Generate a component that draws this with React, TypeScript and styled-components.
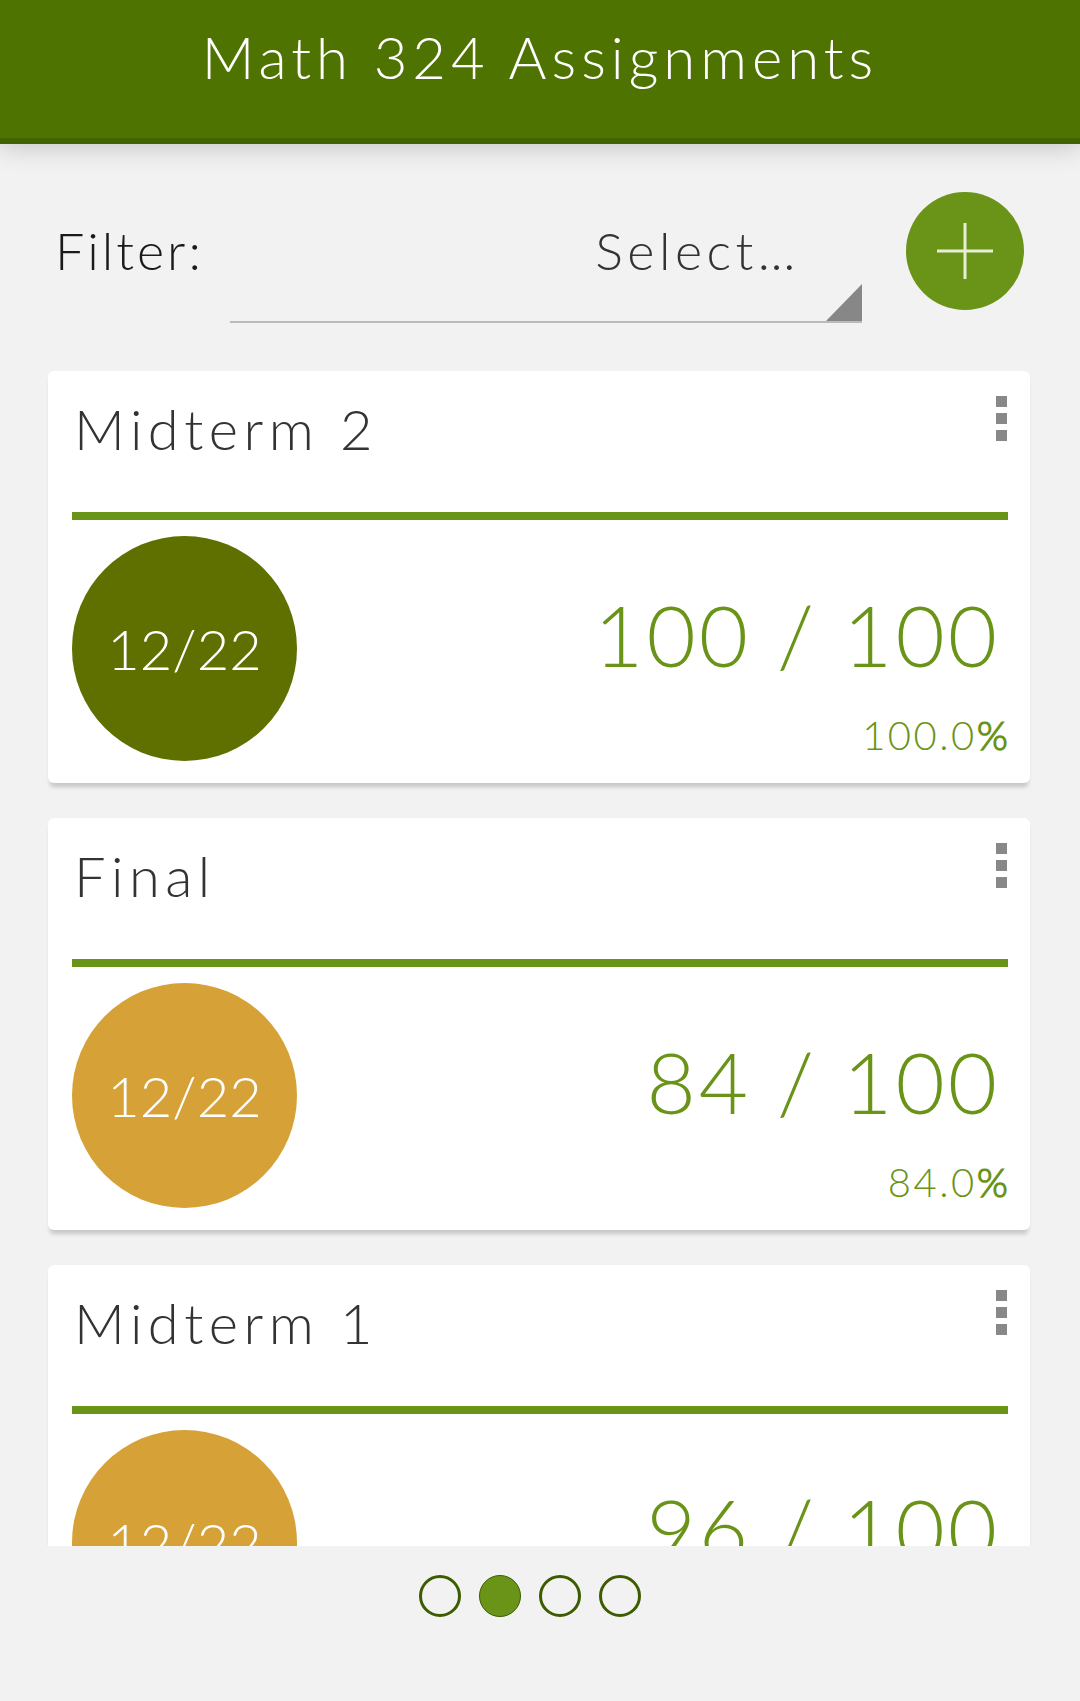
import React from "react";
import styled, { createGlobalStyle } from "styled-components";

const GlobalStyle = createGlobalStyle`
  html, body {
    margin: 0;
    padding: 0;
    background: #f2f2f2;
  }
  body {
    font-family: "Lato Light", Lato, "Open Sans", sans-serif;
    font-weight: 300;
  }
`;

const Page = styled.div`
  width: 1080px;
  height: 1701px;
  overflow: hidden;
  background: #f2f2f2;
`;

const Header = styled.header`
  position: relative;
  z-index: 1;
  box-sizing: border-box;
  height: 144px;
  padding-top: 28px;
  background: #4e7300;
  border-bottom: 6px solid #436300;
  box-shadow: 0 4px 24px rgba(0, 0, 0, 0.18);
  text-align: center;
`;

const Title = styled.h1`
  margin: 0;
  font-size: 58px;
  font-weight: 300;
  line-height: 1;
  letter-spacing: 5px;
  color: #ffffff;
`;

const FilterRow = styled.div`
  display: flex;
  align-items: flex-start;
  margin-top: 48px;
  padding-left: 55px;
`;

const FilterLabel = styled.div`
  width: 175px;
  margin-top: 32px;
  font-size: 52px;
  line-height: 1;
  letter-spacing: 3px;
  color: #1a1a1a;
`;

const Select = styled.div`
  position: relative;
  box-sizing: border-box;
  width: 632px;
  height: 131px;
  padding: 32px 62px 0 0;
  border-bottom: 2px solid #bbbbbb;
  text-align: right;
  font-size: 52px;
  line-height: 1;
  letter-spacing: 4.5px;
  color: #333333;

  &::after {
    content: "";
    position: absolute;
    right: 0;
    bottom: 0;
    width: 36px;
    height: 37px;
    background: #878787;
    clip-path: polygon(100% 0, 100% 100%, 0 100%);
  }
`;

const AddButton = styled.button`
  display: flex;
  align-items: center;
  justify-content: center;
  width: 118px;
  height: 118px;
  margin-left: 44px;
  padding: 0;
  border: none;
  border-radius: 50%;
  background: #6a9418;
`;

const Viewport = styled.div`
  box-sizing: border-box;
  height: 1223px;
  padding: 48px 50px 0 48px;
  overflow: hidden;
`;

const List = styled.div`
  display: flex;
  flex-direction: column;
  gap: 35px;
`;

const Card = styled.div`
  box-sizing: border-box;
  height: 412px;
  padding: 0 22px 0 24px;
  background: #ffffff;
  border-radius: 6px;
  box-shadow: 0 6px 4px -2px rgba(0, 0, 0, 0.18);
`;

const CardHead = styled.div`
  display: flex;
  justify-content: space-between;
  align-items: flex-start;
  box-sizing: border-box;
  height: 141px;
  padding-top: 30px;
`;

const CardTitle = styled.div`
  margin-left: 2px;
  font-size: 56px;
  line-height: 1;
  letter-spacing: 5.5px;
  color: #333333;
`;

const Kebab = styled.div`
  display: flex;
  flex-direction: column;
  gap: 6px;
  margin-top: -5px;
  margin-right: 1px;

  span {
    width: 11px;
    height: 11px;
    background: #888888;
  }
`;

const Divider = styled.div`
  height: 8px;
  background: #6a9418;
`;

const CardBody = styled.div`
  display: flex;
  justify-content: space-between;
  align-items: flex-start;
`;

const Badge = styled.div<{ $color: string }>`
  display: flex;
  align-items: center;
  justify-content: center;
  width: 225px;
  height: 225px;
  margin-top: 16px;
  border-radius: 50%;
  background: ${(p) => p.$color};
  font-size: 56px;
  line-height: 1;
  letter-spacing: 0;
  color: #ffffff;
`;

const ScoreCol = styled.div`
  display: flex;
  flex-direction: column;
  align-items: flex-end;
  padding-top: 72px;
`;

const Score = styled.div`
  margin-right: 8px;
  font-size: 85px;
  line-height: 1;
  letter-spacing: 3px;
  color: #6a9418;
  white-space: pre;
`;

const Percent = styled.div`
  margin-top: 38px;
  font-size: 40px;
  line-height: 1;
  letter-spacing: 2.5px;
  color: #6a9418;

  b {
    font-weight: 700;
    letter-spacing: 0;
  }
`;

const Dots = styled.div`
  display: flex;
  justify-content: center;
  gap: 18px;
  margin-top: 29px;
  padding-right: 21px;
`;

const Dot = styled.span<{ $active?: boolean }>`
  box-sizing: border-box;
  width: 42px;
  height: 42px;
  border-radius: 50%;
  border: ${(p) => (p.$active ? "1px" : "3px")} solid #3d5c00;
  background: ${(p) => (p.$active ? "#6a9418" : "transparent")};
`;

type Assignment = {
  name: string;
  color: string;
  score: number;
  total: number;
};

const assignments: Assignment[] = [
  { name: "Midterm 2", color: "#5f7000", score: 100, total: 100 },
  { name: "Final", color: "#d6a136", score: 84, total: 100 },
  { name: "Midterm 1", color: "#d6a136", score: 96, total: 100 },
];

const PlusIcon = () => (
  <svg width="58" height="58" viewBox="0 0 58 58">
    <path d="M29 1v56M1 29h56" stroke="#e6efd6" strokeWidth="3" fill="none" />
  </svg>
);

const AssignmentCard = ({ a }: { a: Assignment }) => (
  <Card>
    <CardHead>
      <CardTitle>{a.name}</CardTitle>
      <Kebab>
        <span />
        <span />
        <span />
      </Kebab>
    </CardHead>
    <Divider />
    <CardBody>
      <Badge $color={a.color}>12/22</Badge>
      <ScoreCol>
        <Score>{`${a.score} / ${a.total}`}</Score>
        <Percent>
          {((a.score / a.total) * 100).toFixed(1)}
          <b>%</b>
        </Percent>
      </ScoreCol>
    </CardBody>
  </Card>
);

export default function App() {
  return (
    <Page>
      <GlobalStyle />
      <Header>
        <Title>Math 324 Assignments</Title>
      </Header>
      <FilterRow>
        <FilterLabel>Filter:</FilterLabel>
        <Select>Select…</Select>
        <AddButton aria-label="Add">
          <PlusIcon />
        </AddButton>
      </FilterRow>
      <Viewport>
        <List>
          {assignments.map((a) => (
            <AssignmentCard key={a.name} a={a} />
          ))}
        </List>
      </Viewport>
      <Dots>
        <Dot />
        <Dot $active />
        <Dot />
        <Dot />
      </Dots>
    </Page>
  );
}
